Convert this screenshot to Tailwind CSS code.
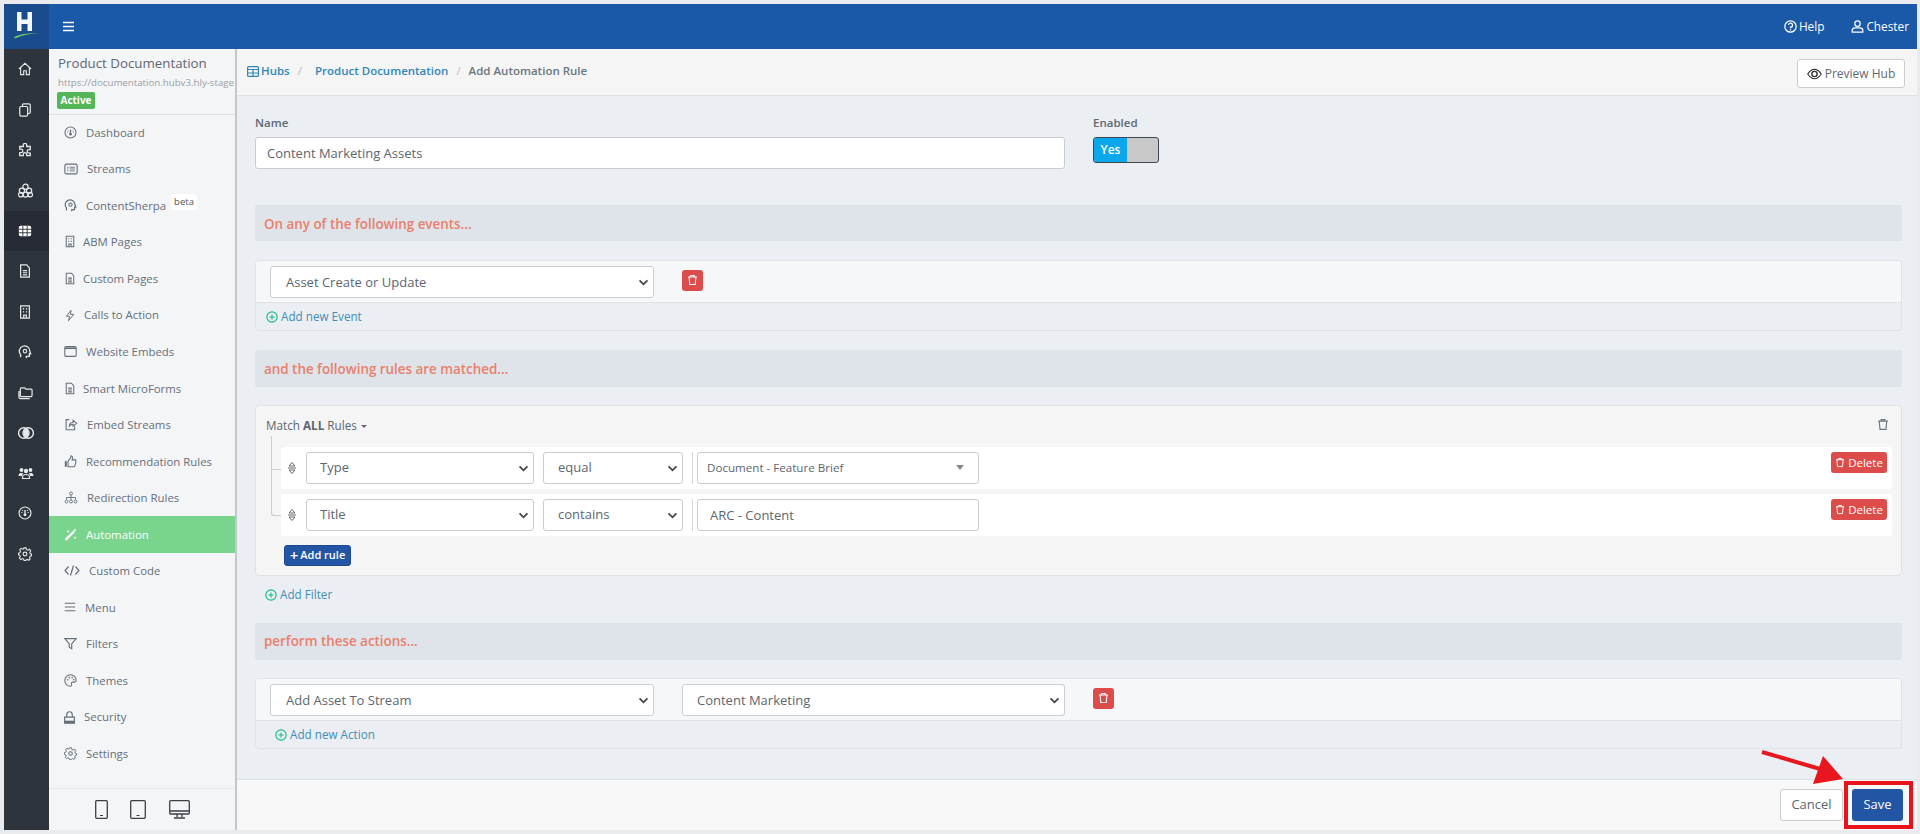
<!DOCTYPE html>
<html lang="en">
  <head>
    <meta charset="UTF-8" />
    <title>Add Automation Rule</title>
    <script src="https://cdn.jsdelivr.net/npm/@tailwindcss/browser@4"></script>
  </head>
  <body class="bg-[#e9ebee] text-[#5b6670] font-['Open_Sans',sans-serif] text-[13px] overflow-hidden">
    <!-- shared icons -->
    <svg class="hidden">
      <symbol id="i-home" viewBox="0 0 16 16"><path d="M1 8 8 1.500 15 8M3 6.500V14.500H6.500V10H9.500V14.500H13V6.500" fill="none" stroke="currentColor" stroke-width="1.300"/></symbol>
      <symbol id="i-docs" viewBox="0 0 16 16"><path d="M5 4V2.500A1.500 1.500 0 0 1 6.500 1H12.500A1.500 1.500 0 0 1 14 2.500V10.500A1.500 1.500 0 0 1 12.500 12H11M3.500 4H9.500A1.500 1.500 0 0 1 11 5.500V13.500A1.500 1.500 0 0 1 9.500 15H3.500A1.500 1.500 0 0 1 2 13.500V5.500A1.500 1.500 0 0 1 3.500 4Z" fill="none" stroke="currentColor" stroke-width="1.400"/></symbol>
      <symbol id="i-puzzle" viewBox="0 0 16 16"><path d="M6 2.500a2 2 0 0 1 4 0V4h4v3.500h-1.500a2 2 0 0 0 0 4H14V14.500H10V13a2 2 0 0 0-4 0v1.500H2V11H3.500a2 2 0 0 0 0-4H2V4H6Z" fill="none" stroke="currentColor" stroke-width="1.500"/></symbol>
      <symbol id="i-boxes" viewBox="0 0 16 16"><g fill="none" stroke="currentColor" stroke-width="1.300"><circle cx="8" cy="4" r="2.800"/><circle cx="4.200" cy="8.200" r="2.800"/><circle cx="11.800" cy="8.200" r="2.800"/><circle cx="2.900" cy="12.400" r="2.400"/><circle cx="8" cy="12.400" r="2.600"/><circle cx="13.100" cy="12.400" r="2.400"/></g></symbol>
      <symbol id="i-grid" viewBox="0 0 16 16"><rect x="1" y="2" width="14" height="12" rx="2" fill="currentColor"/><path d="M5.500 2V14M10.500 2V14M1 6H15M1 10H15" stroke="#272c34" stroke-width="1"/></symbol>
      <symbol id="i-file" viewBox="0 0 16 16"><path d="M3 1H10L13 4.500V15H3ZM5.500 7.500H10.500M5.500 10H10.500M5.500 12.500H10.500" fill="none" stroke="currentColor" stroke-width="1.400"/></symbol>
      <symbol id="i-building" viewBox="0 0 16 16"><path d="M3 1H13V15H3ZM6.500 15V11.500H9.500V15" fill="none" stroke="currentColor" stroke-width="1.400"/><path d="M5.500 3.500H7V5H5.500ZM9 3.500H10.500V5H9ZM5.500 7H7V8.500H5.500ZM9 7H10.500V8.500H9Z" fill="currentColor"/></symbol>
      <symbol id="i-head" viewBox="0 0 16 16"><path d="M3 14V11A6 6 0 1 1 13.500 7L14.500 10H13V13H9.500V15" fill="none" stroke="currentColor" stroke-width="1.500"/><circle cx="8" cy="7" r="2" fill="none" stroke="currentColor" stroke-width="1.300"/></symbol>
      <symbol id="i-folders" viewBox="0 0 16 16"><path d="M3 12.500H13.500A1.500 1.500 0 0 0 15 11V5.500A1 1 0 0 0 14 4.500H8.500L7 3H3.500A1 1 0 0 0 2.500 4V12.500M1 6.500V13A1.500 1.500 0 0 0 2.500 14.500H12.500" fill="none" stroke="currentColor" stroke-width="1.300"/></symbol>
      <symbol id="i-circles" viewBox="0 0 16 16"><circle cx="5.800" cy="8" r="5.200" fill="none" stroke="currentColor" stroke-width="1.400"/><circle cx="10.200" cy="8" r="5.200" fill="none" stroke="currentColor" stroke-width="1.400"/><path d="M8 3.500A5.200 5.200 0 0 0 8 12.500A5.200 5.200 0 0 0 8 3.500Z" fill="currentColor"/></symbol>
      <symbol id="i-people" viewBox="0 0 16 16"><g fill="currentColor"><circle cx="3.500" cy="5" r="1.900"/><circle cx="12.500" cy="5" r="1.900"/><circle cx="8" cy="6" r="2.200"/><path d="M0.500 11C0.500 8.500 2 8 3.500 8C4.500 8 5 8.200 5.500 8.500C4.500 9.200 4 10 4 11ZM15.500 11C15.500 8.500 14 8 12.500 8C11.500 8 11 8.200 10.500 8.500C11.500 9.200 12 10 12 11Z"/></g><path d="M4.500 13.500V12.500C4.500 10.500 6 9.500 8 9.500S11.500 10.500 11.500 12.500V13.500Z" fill="none" stroke="currentColor" stroke-width="1.200"/></symbol>
      <symbol id="i-gauge" viewBox="0 0 16 16"><circle cx="8" cy="8" r="6.800" fill="none" stroke="currentColor" stroke-width="1.300"/><path d="M8 8.500V4.500" stroke="currentColor" stroke-width="1.600"/><circle cx="8" cy="10" r="1.700" fill="currentColor"/><path d="M3.800 7.500H5M11 7.500H12.200M5 4.800 5.800 5.600M11 4.800 10.200 5.600" stroke="currentColor" stroke-width="1.200"/></symbol>
      <symbol id="i-gear" viewBox="0 0 16 16"><circle cx="8" cy="8" r="2.200" fill="none" stroke="currentColor" stroke-width="1.300"/><path d="M6.800 1H9.200L9.600 3 11.300 3.700 13 2.600 14.600 4.300 13.400 6 14 7.700 15.500 8V10L13.800 10.500 13.100 12.200 14 13.700 12.300 15.200 10.800 14.200 9.200 14.800 8.800 15.500H6.900L6.500 14 4.800 13.300 3.200 14.300 1.500 12.600 2.600 11 1.900 9.400 0.500 9V7L2.200 6.500 2.900 4.800 2 3.100 3.700 1.600 5.200 2.600 6.500 2.100Z" fill="none" stroke="currentColor" stroke-width="1.200"/></symbol>
      <symbol id="i-list" viewBox="0 0 16 16"><rect x="1" y="2.500" width="14" height="11" rx="1.500" fill="none" stroke="currentColor" stroke-width="1.300"/><path d="M3.500 6H5M6.500 6H12.500M3.500 8H5M6.500 8H12.500M3.500 10.200H5M6.500 10.200H12.500" stroke="currentColor" stroke-width="1"/></symbol>
      <symbol id="i-bolt" viewBox="0 0 16 16"><path d="M9.500 1 3 9H7.500L6 15 13 6.500H8.500Z" fill="none" stroke="currentColor" stroke-width="1.300"/></symbol>
      <symbol id="i-window" viewBox="0 0 16 16"><rect x="1" y="2" width="14" height="12" rx="1.500" fill="none" stroke="currentColor" stroke-width="1.300"/><path d="M1 4H15" stroke="currentColor" stroke-width="2"/></symbol>
      <symbol id="i-share" viewBox="0 0 16 16"><path d="M6 2H2V14.500H12.500V10M6 10C6 6.500 8 5.500 10.500 5.500V3L15 6.500 10.500 10V7.700C8.500 7.700 7 8.500 6 10Z" fill="none" stroke="currentColor" stroke-width="1.300"/></symbol>
      <symbol id="i-thumb" viewBox="0 0 16 16"><rect x="1" y="7.500" width="2.500" height="7" fill="currentColor"/><path d="M5 7.500 8.500 3V1C10.500 1 11 3 10 6H14.500C15 8 14 13 12.500 14.500H5Z" fill="none" stroke="currentColor" stroke-width="1.300"/></symbol>
      <symbol id="i-tree" viewBox="0 0 16 16"><g fill="none" stroke="currentColor" stroke-width="1.100"><circle cx="8" cy="3" r="1.800"/><circle cx="2.500" cy="13" r="1.800"/><circle cx="8" cy="13" r="1.800"/><circle cx="13.500" cy="13" r="1.800"/><path d="M8 5V11M2.500 11V8H13.500V11"/></g></symbol>
      <symbol id="i-wand" viewBox="0 0 16 16"><path d="M2 13.500 3 14.500 12.500 5 11.500 4Z" fill="none" stroke="currentColor" stroke-width="1.500"/><path d="M14 1 15 3 13 4 12 2ZM5 2 5.500 3.500 7 4 5.500 4.500 5 6 4.500 4.500 3 4 4.500 3.500ZM13.500 10 14 11.500 15.500 12 14 12.500 13.500 14 13 12.500 11.500 12 13 11.500Z" fill="currentColor"/></symbol>
      <symbol id="i-menu" viewBox="0 0 16 16"><path d="M1 3H15M1 8H15M1 13H15" stroke="currentColor" stroke-width="1.500"/></symbol>
      <symbol id="i-filter" viewBox="0 0 16 16"><path d="M1 2H15L9.500 8.500V14.500L6.500 12.500V8.500Z" fill="none" stroke="currentColor" stroke-width="1.400"/></symbol>
      <symbol id="i-palette" viewBox="0 0 16 16"><path d="M8 1A7 7 0 1 0 8 15C10 15 9.500 12.800 9 12C8.500 10.800 9.500 10 11 10H13C14.500 10 15 9 15 8A7 7 0 0 0 8 1Z" fill="none" stroke="currentColor" stroke-width="1.300"/><g fill="currentColor"><circle cx="4.500" cy="7" r="1"/><circle cx="6.500" cy="4.500" r="1"/><circle cx="10" cy="4.500" r="1"/><circle cx="12" cy="7" r="1"/></g></symbol>
      <symbol id="i-lock" viewBox="0 0 12 14"><path d="M3 6.500V3.700A3 3 0 0 1 9 3.700V6.500M0.700 6.500H11.300V13.300H0.700Z" fill="none" stroke="currentColor" stroke-width="1.300"/><path d="M0.700 10.500H11.300V13.300H0.700Z" fill="currentColor"/></symbol>
      <symbol id="i-trash" viewBox="0 0 16 16"><path d="M1.500 3.500H14.500M5.500 3.500V1.500H10.500V3.500M3 3.500 4 14.500H12L13 3.500" fill="none" stroke="currentColor" stroke-width="1.500"/></symbol>
      <symbol id="i-plus-c" viewBox="0 0 16 16"><circle cx="8" cy="8" r="6.900" fill="none" stroke="currentColor" stroke-width="1.500"/><path d="M8 4.500V11.500M4.500 8H11.500" stroke="currentColor" stroke-width="1.400"/></symbol>
      <symbol id="i-chev" viewBox="0 0 12 8"><path d="M1.500 1.500 6 6 10.500 1.500" fill="none" stroke="currentColor" stroke-width="2"/></symbol>
      <symbol id="i-sort" viewBox="0 0 10 14"><path d="M2 5 5 1.500 8 5ZM2 9H8L5 12.500Z" fill="none" stroke="currentColor" stroke-width="1"/><path d="M1 7H9" stroke="currentColor" stroke-width="1"/></symbol>
    </svg>

    <div class="mt-[4px] ml-[4px] mr-[3px] h-[826px] flex flex-col">
      <!-- top bar -->
      <header class="h-[45px] shrink-0 flex bg-[#1a59a7] text-white">
        <div class="w-[45px] shrink-0 bg-[#1a4b8d] flex justify-center">
          <svg viewBox="0 0 45 45" class="w-[45px] h-[45px]">
            <path d="M13 8H17.500V15.500H23.500V8H28V27H23.500V20H17.500V27H13Z" fill="#f4f7fb" />
            <path d="M10 33C17 29.500 26 29 34 29.300C26 30 18 31 11 34.500Z" fill="#6fd06a" />
          </svg>
        </div>
        <button class="ml-[14px]">
          <svg class="w-[11px] h-[11px]" viewBox="0 0 11 11"><path d="M0 1.500H11M0 5.500H11M0 9.500H11" stroke="white" stroke-width="1.500" /></svg>
        </button>
        <div class="ml-auto flex items-center text-[11.800px] pr-[8px]">
          <svg class="w-[13px] h-[13px] mr-[2px]" viewBox="0 0 16 16"><circle cx="8" cy="8" r="7" fill="none" stroke="white" stroke-width="1.500" /><path d="M5.500 6.200A2.500 2.500 0 1 1 8 8.800V10M8 11.300V12.800" fill="none" stroke="white" stroke-width="1.500" /></svg>
          <span>Help</span>
          <svg class="w-[13px] h-[13px] ml-[27px] mr-[2px]" viewBox="0 0 16 16"><circle cx="8" cy="4.500" r="3.300" fill="none" stroke="white" stroke-width="1.500" /><path d="M1.500 15V13C1.500 11 3 9.800 5 9.800H11C13 9.800 14.500 11 14.500 13V15Z" fill="none" stroke="white" stroke-width="1.500" /></svg>
          <span>Chester</span>
        </div>
      </header>

      <div class="flex-1 flex min-h-0">
        <!-- icon rail -->
        <nav class="w-[45px] shrink-0 bg-[#2d343c] text-[#e6e9ec]">
          <a class="h-[40.400px] flex items-center justify-center pr-[3px]"><svg class="w-[14px] h-[14px]"><use href="#i-home" /></svg></a>
          <a class="h-[40.400px] flex items-center justify-center pr-[3px]"><svg class="w-[14px] h-[14px]"><use href="#i-docs" /></svg></a>
          <a class="h-[40.400px] flex items-center justify-center pr-[3px]"><svg class="w-[14px] h-[14px]"><use href="#i-puzzle" /></svg></a>
          <a class="h-[40.400px] flex items-center justify-center pr-[3px]"><svg class="w-[15px] h-[15px]"><use href="#i-boxes" /></svg></a>
          <a class="h-[40.400px] flex items-center justify-center pr-[3px] bg-[#272c34] text-white"><svg class="w-[14px] h-[14px]"><use href="#i-grid" /></svg></a>
          <a class="h-[40.400px] flex items-center justify-center pr-[3px]"><svg class="w-[14px] h-[14px]"><use href="#i-file" /></svg></a>
          <a class="h-[40.400px] flex items-center justify-center pr-[3px]"><svg class="w-[14px] h-[14px]"><use href="#i-building" /></svg></a>
          <a class="h-[40.400px] flex items-center justify-center pr-[3px]"><svg class="w-[14px] h-[14px]"><use href="#i-head" /></svg></a>
          <a class="h-[40.400px] flex items-center justify-center pr-[2px]"><svg class="w-[15px] h-[15px]"><use href="#i-folders" /></svg></a>
          <a class="h-[40.400px] flex items-center justify-center pr-[2px]"><svg class="w-[16px] h-[16px]"><use href="#i-circles" /></svg></a>
          <a class="h-[40.400px] flex items-center justify-center pr-[2px]"><svg class="w-[16px] h-[16px]"><use href="#i-people" /></svg></a>
          <a class="h-[40.400px] flex items-center justify-center pr-[3px]"><svg class="w-[14px] h-[14px]"><use href="#i-gauge" /></svg></a>
          <a class="h-[40.400px] flex items-center justify-center pr-[3px]"><svg class="w-[14px] h-[14px]"><use href="#i-gear" /></svg></a>
        </nav>

        <!-- hub sidebar -->
        <aside class="w-[188px] shrink-0 bg-[#f4f5f7] border-r-2 border-[#c3c6ca] flex flex-col text-[#66707a] text-[11.400px]">
          <div class="h-[66px] shrink-0 border-b border-[#dcdfe3] pl-[9px] pt-[5px]">
            <div class="text-[13.300px] leading-[18px] text-[#5f6871] whitespace-nowrap">Product Documentation</div>
            <div class="text-[9.700px] leading-[14px] mt-[4px] text-[#9aa0a6] whitespace-nowrap">https://documentation.hubv3.hly-stage</div>
            <span class="block w-[38px] h-[17px] mt-[2px] -ml-[1px] rounded-[2px] bg-[#55b559] text-white text-[10px] font-bold leading-[17px] text-center">Active</span>
          </div>
          <ul class="-mt-[1px]">
            <li class="h-[36.550px] flex items-center pl-[15px]"><svg class="w-[13px] h-[13px] shrink-0"><use href="#i-gauge" /></svg><span class="ml-[9px]">Dashboard</span></li>
            <li class="h-[36.550px] flex items-center pl-[15px]"><svg class="w-[14px] h-[14px] shrink-0"><use href="#i-list" /></svg><span class="ml-[9px]">Streams</span></li>
            <li class="h-[36.550px] flex items-center pl-[15px]"><svg class="w-[13px] h-[13px] shrink-0"><use href="#i-head" /></svg><span class="ml-[9px]">ContentSherpa</span><span class="ml-[5px] -mt-[7px] px-[3px] rounded-[3px] bg-white text-[9.500px] leading-[16px] text-[#555]">beta</span></li>
            <li class="h-[36.550px] flex items-center pl-[15px]"><svg class="w-[12px] h-[13px] shrink-0"><use href="#i-building" /></svg><span class="ml-[7px]">ABM Pages</span></li>
            <li class="h-[36.550px] flex items-center pl-[15px]"><svg class="w-[12px] h-[13px] shrink-0"><use href="#i-file" /></svg><span class="ml-[7px]">Custom Pages</span></li>
            <li class="h-[36.550px] flex items-center pl-[15px]"><svg class="w-[12px] h-[13px] shrink-0"><use href="#i-bolt" /></svg><span class="ml-[8px]">Calls to Action</span></li>
            <li class="h-[36.550px] flex items-center pl-[15px]"><svg class="w-[13px] h-[13px] shrink-0"><use href="#i-window" /></svg><span class="ml-[9px]">Website Embeds</span></li>
            <li class="h-[36.550px] flex items-center pl-[15px]"><svg class="w-[12px] h-[13px] shrink-0"><use href="#i-file" /></svg><span class="ml-[7px]">Smart MicroForms</span></li>
            <li class="h-[36.550px] flex items-center pl-[15px]"><svg class="w-[14px] h-[13px] shrink-0"><use href="#i-share" /></svg><span class="ml-[9px]">Embed Streams</span></li>
            <li class="h-[36.550px] flex items-center pl-[15px]"><svg class="w-[13px] h-[13px] shrink-0"><use href="#i-thumb" /></svg><span class="ml-[9px]">Recommendation Rules</span></li>
            <li class="h-[36.550px] flex items-center pl-[15px]"><svg class="w-[14px] h-[13px] shrink-0"><use href="#i-tree" /></svg><span class="ml-[9px]">Redirection Rules</span></li>
            <li class="h-[36.550px] flex items-center pl-[15px] bg-[#79d58d] text-white"><svg class="w-[13px] h-[13px] shrink-0"><use href="#i-wand" /></svg><span class="ml-[9px]">Automation</span></li>
            <li class="h-[36.550px] flex items-center pl-[15px]"><svg class="w-[16px] h-[11px] shrink-0" viewBox="0 0 16 11"><path d="M4.500 1.500 1 5.500 4.500 9.500M11.500 1.500 15 5.500 11.500 9.500M9.500 0.500 6.500 10.500" fill="none" stroke="currentColor" stroke-width="1.200" /></svg><span class="ml-[9px]">Custom Code</span></li>
            <li class="h-[36.550px] flex items-center pl-[15px]"><svg class="w-[12px] h-[12px] shrink-0"><use href="#i-menu" /></svg><span class="ml-[9px]">Menu</span></li>
            <li class="h-[36.550px] flex items-center pl-[15px]"><svg class="w-[13px] h-[13px] shrink-0"><use href="#i-filter" /></svg><span class="ml-[9px]">Filters</span></li>
            <li class="h-[36.550px] flex items-center pl-[15px]"><svg class="w-[13px] h-[13px] shrink-0"><use href="#i-palette" /></svg><span class="ml-[9px]">Themes</span></li>
            <li class="h-[36.550px] flex items-center pl-[15px]"><svg class="w-[11px] h-[13px] shrink-0"><use href="#i-lock" /></svg><span class="ml-[9px]">Security</span></li>
            <li class="h-[36.550px] flex items-center pl-[15px]"><svg class="w-[13px] h-[13px] shrink-0"><use href="#i-gear" /></svg><span class="ml-[9px]">Settings</span></li>
          </ul>
          <div class="mt-auto h-[42px] border-t border-[#e6e8eb] flex items-center text-[#3a4048]">
            <svg class="ml-[46px] w-[13px] h-[19px]" viewBox="0 0 13 19"><rect x="0.700" y="0.700" width="11.600" height="17.600" rx="1" fill="none" stroke="currentColor" stroke-width="1.300" /><path d="M5 15.500H8" stroke="currentColor" stroke-width="1" /></svg>
            <svg class="ml-[22px] w-[16px] h-[19px]" viewBox="0 0 16 19"><rect x="0.700" y="0.700" width="14.600" height="17.600" rx="1" fill="none" stroke="currentColor" stroke-width="1.300" /><path d="M6.500 15.500H9.500" stroke="currentColor" stroke-width="1" /></svg>
            <svg class="ml-[23px] w-[21px] h-[19px]" viewBox="0 0 21 19"><rect x="0.700" y="0.700" width="19.600" height="13.300" rx="1" fill="none" stroke="currentColor" stroke-width="1.300" /><path d="M1 11H20M8 14V17M13 14V17M5 18H16" stroke="currentColor" stroke-width="1.300" /></svg>
          </div>
        </aside>

        <!-- main -->
        <main class="flex-1 min-w-0 flex flex-col bg-[#ebeef3]">
          <div class="h-[47px] shrink-0 bg-[#f5f5f5] border-b border-[#dfe1e4] flex items-center pl-[10px] pr-[12px] pb-[2px] text-[11.500px] font-semibold">
            <svg class="w-[12px] h-[11px] text-[#3187b8]" viewBox="0 0 12 11"><rect x="0.600" y="0.600" width="10.800" height="9.800" rx="1" fill="none" stroke="currentColor" stroke-width="1.200" /><path d="M0.600 3.500H11.400M0.600 7H11.400M6 3.500V10" stroke="currentColor" stroke-width="1.200" /></svg>
            <a class="ml-[2px] text-[#3187b8]">Hubs</a>
            <span class="ml-[8px] mr-[13px] text-[#b8bcc0] font-normal">/</span>
            <a class="text-[#3187b8]">Product Documentation</a>
            <span class="ml-[8px] mr-[8px] text-[#b8bcc0] font-normal">/</span>
            <span class="text-[#6c757d]">Add Automation Rule</span>
            <button class="ml-auto mt-[5px] w-[108px] h-[29px] bg-white border border-[#c9ccd0] rounded-[3px] flex items-center justify-center text-[12px] font-normal text-[#5f6871]">
              <svg class="w-[15px] h-[12px] mr-[3px] text-[#333]" viewBox="0 0 16 12"><path d="M0.800 6C3 2.500 5.500 1 8 1S13 2.500 15.200 6C13 9.500 10.500 11 8 11S3 9.500 0.800 6Z" fill="none" stroke="currentColor" stroke-width="1.200" /><circle cx="8" cy="6" r="2.800" fill="none" stroke="currentColor" stroke-width="1.500" /></svg>
              Preview Hub
            </button>
          </div>

          <div class="flex-1 min-h-0 pl-[18px] pr-[15px]">
            <!-- name + enabled -->
            <div class="flex pt-[17px]">
              <div class="w-[810px]">
                <label class="block text-[11.500px] font-semibold leading-[20px] text-[#5f6871] mb-[4px]">Name</label>
                <input value="Content Marketing Assets" class="w-full h-[32px] px-[11px] bg-white border border-[#c9ccd0] rounded-[3px] text-[13px] text-[#5b6670]" />
              </div>
              <div class="ml-[28px]">
                <label class="block text-[11.500px] font-semibold leading-[20px] text-[#5f6871] mb-[4px]">Enabled</label>
                <div class="w-[66px] h-[26px] rounded-[3px] border border-[#3f4650] bg-[#c8c8c8] flex overflow-hidden">
                  <span class="w-[33px] bg-[#0aa7ea] text-white text-[12px] font-semibold leading-[24px] text-center">Yes</span>
                </div>
              </div>
            </div>

            <!-- events -->
            <h3 class="mt-[36px] h-[36px] bg-[#dfe3ea] rounded-[3px] pl-[9px] pt-[1px] text-[13.400px] font-semibold leading-[36px] text-[#e9806a]">On any of the following events...</h3>
            <div class="mt-[19px] h-[71px] border border-[#dfe2e6] rounded-[4px] overflow-hidden">
              <div class="h-[42px] bg-[#f6f7f9] border-b border-[#dfe2e6] flex items-center pl-[14px]">
                <div class="relative w-[384px] h-[32px]">
                  <select class="appearance-none w-full h-full pl-[15px] pt-[2px] bg-white border border-[#c9ccd0] rounded-[3px] text-[13px]"><option>Asset Create or Update</option></select>
                  <svg class="absolute right-[5px] top-[13px] w-[11px] h-[7px] text-[#444]"><use href="#i-chev" /></svg>
                </div>
                <button class="ml-[28px] -mt-[3px] w-[21px] h-[21px] bg-[#dc4c4b] rounded-[3px] flex items-center justify-center text-white"><svg class="w-[11px] h-[12px]"><use href="#i-trash" /></svg></button>
              </div>
              <div class="h-[27px] flex items-center pl-[10px] text-[11.700px] text-[#3f8fb5]"><svg class="w-[12px] h-[12px] mr-[3px] text-[#18b88a]"><use href="#i-plus-c" /></svg>Add new Event</div>
            </div>

            <!-- rules -->
            <h3 class="mt-[19px] h-[37px] bg-[#dfe3ea] rounded-[3px] pl-[9px] pt-[1px] text-[13.400px] font-semibold leading-[37px] text-[#e9806a]">and the following rules are matched...</h3>
            <div class="mt-[18px] h-[171px] bg-[#f5f5f5] border border-[#dfe2e6] rounded-[4px] relative pt-[41px] pr-[9px]">
              <div class="absolute left-[10px] top-[11px] text-[11.700px] leading-[16px]">Match <b>ALL</b> Rules <span class="inline-block ml-[1px] mb-[2px] border-x-[3px] border-t-[3px] border-x-transparent border-t-[#666]"></span></div>
              <svg class="absolute right-[12px] top-[12px] w-[12px] h-[13px] text-[#6c757d]"><use href="#i-trash" /></svg>
              <!-- tree lines -->
              <div class="absolute left-[15px] top-[30px] w-[6px] h-[53px] border-l border-[#c9ccd0]"></div>
              <div class="absolute left-[15px] top-[63px] w-[10px] border-t border-[#c9ccd0]"></div>
              <div class="absolute left-[15px] top-[83px] w-[10px] h-[27px] border-l border-b border-[#c9ccd0] rounded-bl-[3px]"></div>

              <div class="ml-[25px] h-[42px] bg-white rounded-[3px] flex items-center">
                <svg class="ml-[6px] w-[10px] h-[14px] text-[#666]"><use href="#i-sort" /></svg>
                <div class="relative ml-[9px] w-[228px] h-[32px]"><select class="appearance-none w-full h-full pl-[13px] bg-white border border-[#c9ccd0] rounded-[3px]"><option>Type</option></select><svg class="absolute right-[5px] top-[13px] w-[11px] h-[7px] text-[#444]"><use href="#i-chev" /></svg></div>
                <div class="relative ml-[9px] w-[140px] h-[32px]"><select class="appearance-none w-full h-full pl-[14px] bg-white border border-[#c9ccd0] rounded-[3px]"><option>equal</option></select><svg class="absolute right-[5px] top-[13px] w-[11px] h-[7px] text-[#444]"><use href="#i-chev" /></svg></div>
                <span class="ml-[9px] w-px h-[32px] bg-[#d5d8dc]"></span>
                <div class="relative ml-[4px] w-[282px] h-[32px] bg-white border border-[#c9ccd0] rounded-[3px] pl-[9px] text-[11.600px] leading-[30px]">Document - Feature Brief<span class="absolute right-[14px] top-[12px] border-x-[4px] border-t-[5px] border-x-transparent border-t-[#888]"></span></div>
                <button class="ml-auto mr-[5px] self-start mt-[5px] w-[56px] h-[21px] bg-[#dc4c4b] rounded-[3px] text-white text-[11.500px] flex items-center justify-center"><svg class="w-[10px] h-[11px] mr-[3px]"><use href="#i-trash" /></svg>Delete</button>
              </div>
              <div class="ml-[25px] mt-[5px] h-[42px] bg-white rounded-[3px] flex items-center">
                <svg class="ml-[6px] w-[10px] h-[14px] text-[#666]"><use href="#i-sort" /></svg>
                <div class="relative ml-[9px] w-[228px] h-[32px]"><select class="appearance-none w-full h-full pl-[13px] bg-white border border-[#c9ccd0] rounded-[3px]"><option>Title</option></select><svg class="absolute right-[5px] top-[13px] w-[11px] h-[7px] text-[#444]"><use href="#i-chev" /></svg></div>
                <div class="relative ml-[9px] w-[140px] h-[32px]"><select class="appearance-none w-full h-full pl-[14px] bg-white border border-[#c9ccd0] rounded-[3px]"><option>contains</option></select><svg class="absolute right-[5px] top-[13px] w-[11px] h-[7px] text-[#444]"><use href="#i-chev" /></svg></div>
                <span class="ml-[9px] w-px h-[32px] bg-[#d5d8dc]"></span>
                <input value="ARC - Content" class="ml-[4px] w-[282px] h-[32px] bg-white border border-[#c9ccd0] rounded-[3px] pl-[12px] text-[#5b6670]" />
                <button class="ml-auto mr-[5px] self-start mt-[5px] w-[56px] h-[21px] bg-[#dc4c4b] rounded-[3px] text-white text-[11.500px] flex items-center justify-center"><svg class="w-[10px] h-[11px] mr-[3px]"><use href="#i-trash" /></svg>Delete</button>
              </div>
              <button class="ml-[28px] mt-[9px] w-[67px] h-[21px] bg-[#2255a4] border border-[#1d4a90] rounded-[3px] text-white text-[11px] font-semibold flex items-center justify-center"><span class="text-[15px] leading-none mr-[2px]">+</span>Add rule</button>
            </div>
            <div class="mt-[10px] h-[18px] flex items-center pl-[10px] text-[11.700px] text-[#3f8fb5]"><svg class="w-[12px] h-[12px] mr-[3px] text-[#18b88a]"><use href="#i-plus-c" /></svg>Add Filter</div>

            <!-- actions -->
            <h3 class="mt-[19px] h-[37px] bg-[#dfe3ea] rounded-[3px] pl-[9px] text-[13.400px] font-semibold leading-[37px] text-[#e9806a]">perform these actions...</h3>
            <div class="mt-[18px] h-[71px] border border-[#dfe2e6] rounded-[4px] overflow-hidden">
              <div class="h-[42px] bg-[#f6f7f9] border-b border-[#dfe2e6] flex items-center pl-[14px]">
                <div class="relative w-[384px] h-[32px]">
                  <select class="appearance-none w-full h-full pl-[15px] pt-[2px] bg-white border border-[#c9ccd0] rounded-[3px]"><option>Add Asset To Stream</option></select>
                  <svg class="absolute right-[5px] top-[13px] w-[11px] h-[7px] text-[#444]"><use href="#i-chev" /></svg>
                </div>
                <div class="relative ml-[28px] w-[383px] h-[32px]">
                  <select class="appearance-none w-full h-full pl-[14px] pt-[2px] bg-white border border-[#c9ccd0] rounded-[3px]"><option>Content Marketing</option></select>
                  <svg class="absolute right-[5px] top-[13px] w-[11px] h-[7px] text-[#444]"><use href="#i-chev" /></svg>
                </div>
                <button class="ml-[28px] -mt-[3px] w-[21px] h-[21px] bg-[#dc4c4b] rounded-[3px] flex items-center justify-center text-white"><svg class="w-[11px] h-[12px]"><use href="#i-trash" /></svg></button>
              </div>
              <div class="h-[27px] flex items-center pl-[19px] text-[11.700px] text-[#3f8fb5]"><svg class="w-[12px] h-[12px] mr-[3px] text-[#18b88a]"><use href="#i-plus-c" /></svg>Add new Action</div>
            </div>
          </div>

          <!-- footer -->
          <footer class="h-[51px] shrink-0 bg-[#f8f8f8] border-t border-[#dfe1e4] flex items-start justify-end pt-[9px] pr-[14px] text-[13px]">
            <button class="w-[63px] h-[32px] bg-white border border-[#c9ccd0] rounded-[3px] text-[#5b6670]">Cancel</button>
            <button class="ml-[9px] w-[51px] h-[32px] bg-[#2255a4] rounded-[3px] text-white">Save</button>
          </footer>
        </main>
      </div>
    </div>

    <!-- annotation added over the screenshot -->
    <div class="absolute left-[1844px] top-[781px] w-[69px] h-[48px] border-4 border-[#e8131b]"></div>
    <svg class="absolute left-[1755px] top-[745px] w-[95px] h-[45px]" viewBox="0 0 95 45">
      <path d="M7 7 72 26" stroke="#e8171f" stroke-width="4" />
      <path d="M58 39 68 11 88 34Z" fill="#e8171f" />
    </svg>
  </body>
</html>
